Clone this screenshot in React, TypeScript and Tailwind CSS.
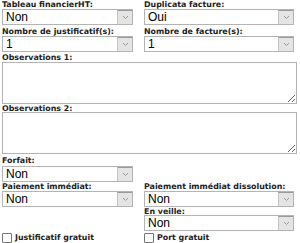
import React from 'react';

function Label({ children, h = 'h-[9px]' }: { children: React.ReactNode; h?: string }) {
  return (
    <div className={`${h} text-[7.9px] leading-[9px] font-bold text-[#222] font-['DejaVu_Sans',sans-serif] whitespace-nowrap`}>
      {children}
    </div>
  );
}

function Select({ value, width }: { value: string; width: string }) {
  return (
    <div
      className={`${width} h-[16px] flex items-stretch border border-[#b4b4b4] bg-white font-['Liberation_Sans',Arial,sans-serif]`}
    >
      <div className="flex-1 pl-[3px] text-[12px] leading-[14px] text-black">{value}</div>
      <div className="w-[15px] flex items-center justify-center bg-[#e4e4e4] border-l border-[#c4c4c4] border-t border-t-[#9a9a9a]">
        <svg width="7" height="5" viewBox="0 0 7 5">
          <path d="M1 1 L3.5 3.5 L6 1" fill="none" stroke="#9a9a9a" strokeWidth="1" />
        </svg>
      </div>
    </div>
  );
}

function Area() {
  return (
    <textarea className="block w-[295px] h-[42px] border border-[#b4b4b4] bg-white resize-y" />
  );
}

function Check({ label }: { label: string }) {
  return (
    <div className="flex items-center gap-[3px] h-[13px]">
      <div className="w-[10px] h-[10px] border border-[#777] rounded-[1px] bg-white" />
      <span className="text-[7.9px] leading-[11px] font-bold text-[#222] font-['DejaVu_Sans',sans-serif] whitespace-nowrap">
        {label}
      </span>
    </div>
  );
}

export default function App() {
  return (
    <div className="w-[300px] h-[243px] bg-white pl-[2px] overflow-hidden">
      <div className="grid grid-cols-[142px_1fr] gap-y-[2px]">
        <div>
          <Label>Tableau financierHT:</Label>
          <Select value="Non" width="w-[131px]" />
        </div>
        <div>
          <Label>Duplicata facture:</Label>
          <Select value="Oui" width="w-[150px]" />
        </div>
        <div>
          <Label>Nombre de justificatif(s):</Label>
          <Select value="1" width="w-[131px]" />
        </div>
        <div>
          <Label>Nombre de facture(s):</Label>
          <Select value="1" width="w-[150px]" />
        </div>
      </div>
      <div className="mt-[1px]">
        <Label>Observations 1:</Label>
        <Area />
      </div>
      <div>
        <Label h="h-[8px]">Observations 2:</Label>
        <Area />
      </div>
      <div className="grid grid-cols-[142px_1fr] mt-[1px]">
        <div className="pt-[1px]">
          <Label h="h-[10px]">Forfait:</Label>
          <Select value="Non" width="w-[131px]" />
        </div>
        <div />
        <div>
          <Label>Paiement immédiat:</Label>
          <Select value="Non" width="w-[131px]" />
        </div>
        <div>
          <Label>Paiement immédiat dissolution:</Label>
          <Select value="Non" width="w-[150px]" />
        </div>
        <div />
        <div>
          <Label h="h-[8px]">En veille:</Label>
          <Select value="Non" width="w-[150px]" />
        </div>
        <div>
          <Check label="Justificatif gratuit" />
        </div>
        <div>
          <Check label="Port gratuit" />
        </div>
      </div>
    </div>
  );
}
